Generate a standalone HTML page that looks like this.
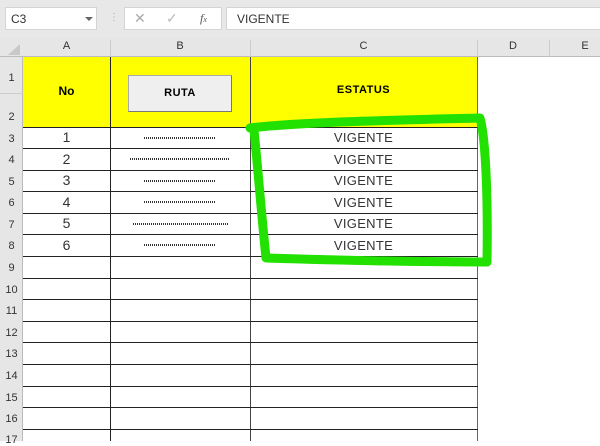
<!DOCTYPE html>
<html><head><style>
*{margin:0;padding:0;box-sizing:border-box}
body{width:600px;height:441px;overflow:hidden;background:#fff;font-family:"Liberation Sans",sans-serif;position:relative}
.a{position:absolute}
.hl{position:absolute;left:23px;width:455px;height:1px;background:#222}
.rn{position:absolute;left:0;width:23px;font-size:11px;color:#333;text-align:center}
.v{position:absolute;left:250px;width:227px;text-align:center;font-size:13px;color:#333;letter-spacing:0.3px}
.n{position:absolute;left:23px;width:87px;text-align:center;font-size:14px;color:#333}
.d{position:absolute;height:2px;background:repeating-linear-gradient(90deg,#333 0 1px,transparent 1px 2px)}
.d2{position:absolute;height:2px;background:#333}
</style></head><body>
<div class="a" style="left:0;top:0;width:600px;height:38px;background:#e8e8e8"></div>
<div class="a" style="left:5px;top:7px;width:92px;height:23px;background:#fff;border:1px solid #d4d4d4;font-size:12px;color:#333;padding:4px 5px">C3</div>
<div class="a" style="left:85px;top:17px;width:0;height:0;border-left:4px solid transparent;border-right:4px solid transparent;border-top:4px solid #666"></div>
<div class="a" style="left:109px;top:12px;font-size:10px;color:#aaa">⋮</div>
<div class="a" style="left:124px;top:7px;width:98px;height:23px;background:#fff;border:1px solid #d4d4d4"></div>
<div class="a" style="left:134px;top:10px;font-size:14px;color:#aaa">✕</div>
<div class="a" style="left:166px;top:10px;font-size:14px;color:#bbb">✓</div>
<div class="a" style="left:200px;top:11px;font-size:12px;color:#555;font-style:italic;font-family:'Liberation Serif',serif">f<span style="font-size:8px">x</span></div>
<div class="a" style="left:226px;top:7px;width:380px;height:23px;background:#fff;border:1px solid #d4d4d4;font-size:12px;color:#333;padding:4px 10px">VIGENTE</div>
<div class="a" style="left:0;top:38px;width:600px;height:19px;background:#e6e6e6;border-bottom:1px solid #bbb"></div>
<div class="a" style="left:0;top:57px;width:23px;height:384px;background:#e6e6e6;border-right:1px solid #bbb"></div>
<div class="a" style="left:8px;top:44px;width:0;height:0;border-left:12px solid transparent;border-bottom:11px solid #c8c8c8"></div>
<div class="a" style="left:23px;top:40px;width:87px;text-align:center;font-size:11px;color:#333">A</div>
<div class="a" style="left:110px;top:40px;width:140px;text-align:center;font-size:11px;color:#333">B</div>
<div class="a" style="left:250px;top:40px;width:227px;text-align:center;font-size:11px;color:#333">C</div>
<div class="a" style="left:477px;top:40px;width:72px;text-align:center;font-size:11px;color:#333">D</div>
<div class="a" style="left:549px;top:40px;width:72px;text-align:center;font-size:11px;color:#333">E</div>
<div class="a" style="left:110px;top:40px;width:1px;height:17px;background:#ccc"></div>
<div class="a" style="left:250px;top:40px;width:1px;height:17px;background:#ccc"></div>
<div class="a" style="left:477px;top:40px;width:1px;height:17px;background:#ccc"></div>
<div class="a" style="left:549px;top:40px;width:1px;height:17px;background:#ccc"></div>
<div class="a" style="left:23px;top:57px;width:455px;height:70px;background:#ffff00"></div>
<div class="a" style="left:23px;top:84px;width:87px;text-align:center;font-size:12px;font-weight:bold">No</div>
<div class="a" style="left:250px;top:84px;width:227px;text-align:center;font-size:11px;font-weight:bold;letter-spacing:0.5px">ESTATUS</div>
<div class="a" style="left:128px;top:75px;width:104px;height:37px;background:#efefef;border:1px solid #aaa;border-right-color:#777;border-bottom-color:#777;text-align:center;font-size:11px;font-weight:bold;line-height:35px;letter-spacing:0.5px">RUTA</div>
<div class="rn" style="top:72px">1</div>
<div class="rn" style="top:111px">2</div>
<div class="a" style="left:0;top:93px;width:23px;height:1px;background:#ccc"></div>
<div class="a" style="left:110px;top:57px;width:1px;height:384px;background:#222"></div>
<div class="a" style="left:250px;top:57px;width:1px;height:384px;background:#444"></div>
<div class="a" style="left:477px;top:57px;width:1px;height:384px;background:#666"></div>
<div class="hl" style="top:127px"></div><div class="hl" style="top:148px"></div><div class="hl" style="top:170px"></div><div class="hl" style="top:191px"></div><div class="hl" style="top:213px"></div><div class="hl" style="top:234px"></div><div class="hl" style="top:256px"></div><div class="hl" style="top:278px"></div><div class="hl" style="top:299px"></div><div class="hl" style="top:321px"></div><div class="hl" style="top:342px"></div><div class="hl" style="top:364px"></div><div class="hl" style="top:386px"></div><div class="hl" style="top:407px"></div><div class="hl" style="top:429px"></div>
<div class="rn" style="top:133px">3</div><div class="rn" style="top:154px">4</div><div class="rn" style="top:176px">5</div><div class="rn" style="top:197px">6</div><div class="rn" style="top:219px">7</div><div class="rn" style="top:240px">8</div><div class="rn" style="top:262px">9</div><div class="rn" style="top:284px">10</div><div class="rn" style="top:305px">11</div><div class="rn" style="top:327px">12</div><div class="rn" style="top:348px">13</div><div class="rn" style="top:370px">14</div><div class="rn" style="top:392px">15</div><div class="rn" style="top:413px">16</div><div class="rn" style="top:434px">17</div>
<div class="n" style="top:129px">1</div><div class="n" style="top:151px">2</div><div class="n" style="top:172px">3</div><div class="n" style="top:194px">4</div><div class="n" style="top:215px">5</div><div class="n" style="top:237px">6</div>
<div class="d" style="left:144px;top:137px;width:72px"></div>
<div class="d" style="left:130px;top:158px;width:100px"></div>
<div class="d" style="left:144px;top:180px;width:72px"></div>
<div class="d" style="left:144px;top:201px;width:72px"></div>
<div class="d" style="left:133px;top:223px;width:96px"></div>
<div class="d" style="left:144px;top:244px;width:72px"></div>
<div class="v" style="top:130px">VIGENTE</div><div class="v" style="top:152px">VIGENTE</div><div class="v" style="top:173px">VIGENTE</div><div class="v" style="top:195px">VIGENTE</div><div class="v" style="top:216px">VIGENTE</div><div class="v" style="top:238px">VIGENTE</div>
<svg class="a" style="left:0;top:0" width="600" height="441"><path d="M250,128 C300,122 400,120 480,118 C486,140 488,200 487,262 C420,262 330,260 266,258 C262,220 258,170 254,130" fill="none" stroke="#22e000" stroke-width="9" stroke-linejoin="round" stroke-linecap="round"/></svg>
</body></html>
